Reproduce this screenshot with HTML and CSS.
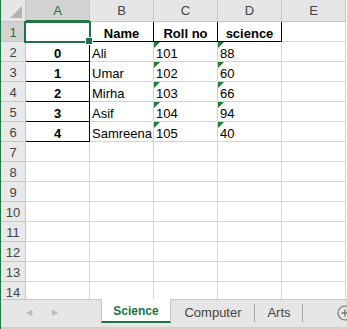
FILE: index.html
```html
<!DOCTYPE html>
<html lang="en">
<head>
  <meta charset="UTF-8">
  <title>Science</title>
  <link rel="stylesheet" href="styles.css">
</head>
<body>
  <div id="book">
    <div id="sheet">
      <div class="grid">
        <!-- column headers -->
        <div class="hd corner"></div>
        <div class="hd col sel">A</div>
        <div class="hd col">B</div>
        <div class="hd col">C</div>
        <div class="hd col">D</div>
        <div class="hd col">E</div>

        <!-- row 1 -->
        <div class="hd row sel">1</div>
        <div class="c b active"></div>
        <div class="c b ctr bold">Name</div>
        <div class="c b ctr bold">Roll no</div>
        <div class="c b ctr bold">science</div>
        <div class="c"></div>

        <div class="hd row">2</div>
        <div class="c b ctr bold">0</div>
        <div class="c">Ali</div>
        <div class="c txt">101</div>
        <div class="c txt">88</div>
        <div class="c"></div>

        <div class="hd row">3</div>
        <div class="c b ctr bold">1</div>
        <div class="c">Umar</div>
        <div class="c txt">102</div>
        <div class="c txt">60</div>
        <div class="c"></div>

        <div class="hd row">4</div>
        <div class="c b ctr bold">2</div>
        <div class="c">Mirha</div>
        <div class="c txt">103</div>
        <div class="c txt">66</div>
        <div class="c"></div>

        <div class="hd row">5</div>
        <div class="c b ctr bold">3</div>
        <div class="c">Asif</div>
        <div class="c txt">104</div>
        <div class="c txt">94</div>
        <div class="c"></div>

        <div class="hd row">6</div>
        <div class="c b ctr bold">4</div>
        <div class="c">Samreena</div>
        <div class="c txt">105</div>
        <div class="c txt">40</div>
        <div class="c"></div>

        <div class="hd row">7</div><div class="c"></div><div class="c"></div><div class="c"></div><div class="c"></div><div class="c"></div>
        <div class="hd row">8</div><div class="c"></div><div class="c"></div><div class="c"></div><div class="c"></div><div class="c"></div>
        <div class="hd row">9</div><div class="c"></div><div class="c"></div><div class="c"></div><div class="c"></div><div class="c"></div>
        <div class="hd row">10</div><div class="c"></div><div class="c"></div><div class="c"></div><div class="c"></div><div class="c"></div>
        <div class="hd row">11</div><div class="c"></div><div class="c"></div><div class="c"></div><div class="c"></div><div class="c"></div>
        <div class="hd row">12</div><div class="c"></div><div class="c"></div><div class="c"></div><div class="c"></div><div class="c"></div>
        <div class="hd row">13</div><div class="c"></div><div class="c"></div><div class="c"></div><div class="c"></div><div class="c"></div>
        <div class="hd row">14</div><div class="c"></div><div class="c"></div><div class="c"></div><div class="c"></div><div class="c"></div>
      </div>
    </div>

    <div id="tabs">
      <div class="nav">
        <span class="arrow">&#9664;</span>
        <span class="arrow">&#9654;</span>
      </div>
      <div class="tab on">Science</div>
      <div class="tab">Computer</div>
      <div class="tab">Arts</div>
      <div class="fill"></div>
      <svg class="add" width="16" height="16" viewBox="0 0 16 16">
        <circle cx="8" cy="8" r="7" fill="none" stroke="#777" stroke-width="1.2"/>
        <path d="M8 4.5v7M4.5 8h7" stroke="#777" stroke-width="1.4"/>
      </svg>
    </div>
  </div>
</body>
</html>
```

FILE: styles.css
```css
/* Basic reset */
* { margin: 0; padding: 0; box-sizing: border-box; }
html, body { width: 347px; height: 329px; overflow: hidden; background: #fff; }
body { font-family: 'Liberation Sans', Arial, sans-serif; font-size: 13px; color: #000; }

#book { display: flex; flex-direction: column; height: 329px; border-left: 1px solid #217346; }

/* Sheet grid */
#sheet { height: 299px; overflow: hidden; }
.grid { display: grid; grid-template-columns: 25px repeat(5, 64px); grid-template-rows: 22px; grid-auto-rows: 20px; }

.hd { background: #e6e6e6; color: #444; border-right: 1px solid #c6c6c6; border-bottom: 1px solid #c6c6c6;
  display: flex; align-items: center; justify-content: center; font-size: 13px; }
.hd.row { background: #e9e9e9; padding-top: 2px; }
.hd.sel { background: #d2d2d2; color: #217346; }
.hd.col.sel { border-bottom: 2px solid #217346; }
.corner { position: relative; }
.corner::after { content: ''; position: absolute; right: 3px; bottom: 3px;
  border-left: 12px solid transparent; border-bottom: 12px solid #b4b4b4; }

.c { position: relative; border-right: 1px solid #d4d4d4; border-bottom: 1px solid #d4d4d4;
  padding: 3px 2px 0; line-height: 17px; white-space: nowrap; }
.c.b { border-right-color: #000; border-bottom-color: #000; }
.ctr { text-align: center; }
.bold { font-weight: bold; }

/* number stored as text marker */
.txt::before { content: ''; position: absolute; left: 0; top: 0;
  border-top: 6px solid #1e7b34; border-right: 6px solid transparent; }

/* active cell */
.active::after { content: ''; position: absolute; left: -2px; top: -1px; right: -2px; bottom: -2px;
  border: 2px solid #217346; }
.active::before { content: ''; position: absolute; right: -4px; bottom: -4px; width: 6px; height: 6px;
  background: #217346; border: 1px solid #fff; z-index: 2; }

/* Sheet tabs */
#tabs { display: flex; align-items: stretch; height: 30px; background: #e6e6e6;
  border-top: 1px solid #c6c6c6; border-bottom: 2px solid #d0d0d0; }
.nav { width: 100px; display: flex; align-items: center; gap: 20px; padding-left: 25px; padding-bottom: 2px; }
.arrow { font-size: 8px; color: #bdbdbd; }
.tab { display: flex; align-items: center; justify-content: center; color: #444; font-size: 13px;
  position: relative; padding-bottom: 2px; }
.tab.on { width: 70px; background: #fff; color: #217346; font-weight: bold; font-size: 12px;
  border-left: 1px solid #c6c6c6; border-right: 1px solid #c6c6c6; border-bottom: 2px solid #217346;
  margin-bottom: 4px; padding-bottom: 0; padding-top: 2px; margin-top: -1px; }
.tab:nth-of-type(3) { width: 84px; }
.tab:nth-of-type(4) { width: 48px; }
.tab:nth-of-type(3)::after, .tab:nth-of-type(4)::after { content: ''; position: absolute; right: 0; top: 4px; bottom: 5px;
  border-right: 1px solid #a6a6a6; }
.fill { flex: 1; }
.add { align-self: center; margin-right: -6px; margin-bottom: 2px; }
```
